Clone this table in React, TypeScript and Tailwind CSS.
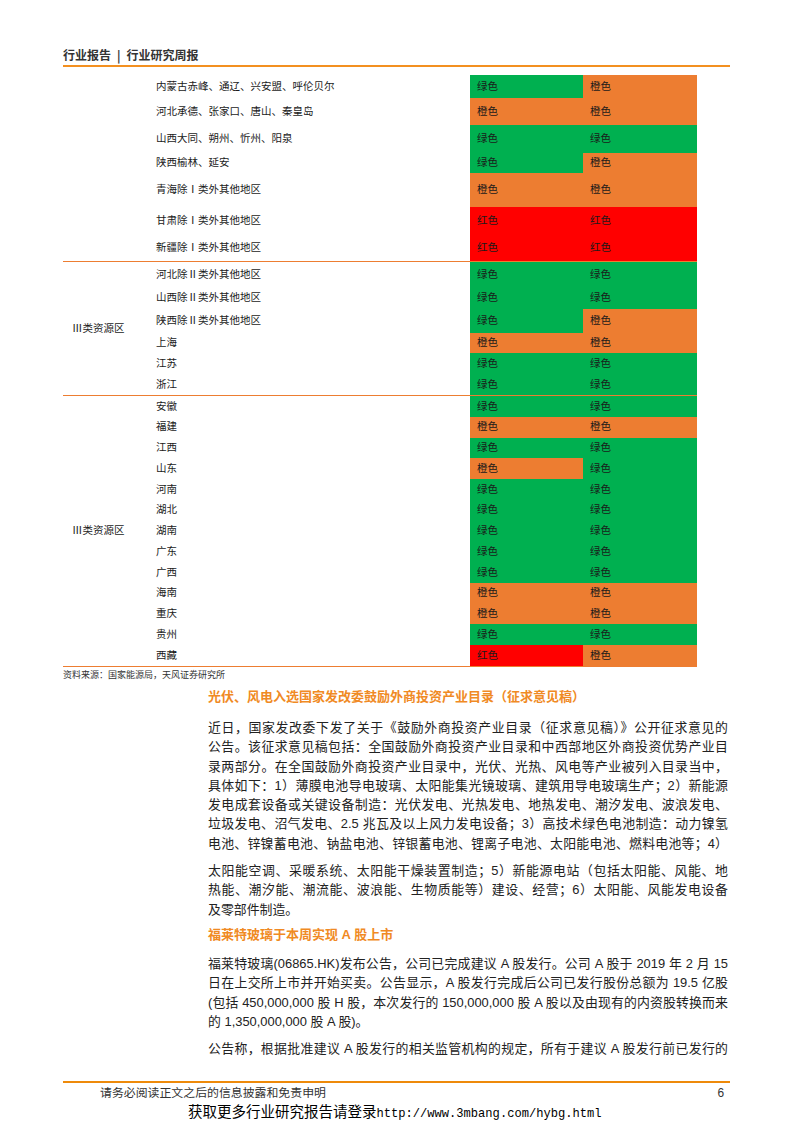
const GREEN = "bg-[#00B050]";
const ORANGE = "bg-[#ED7D31]";
const RED = "bg-[#FF0000]";

type Cell = "g" | "o" | "r";
type Row = { name: string; a: Cell; b: Cell; h: number };

const cellBg: Record<Cell, string> = { g: GREEN, o: ORANGE, r: RED };
const cellText: Record<Cell, string> = { g: "绿色", o: "橙色", r: "红色" };

const sections: { label: string; rows: Row[] }[] = [
  {
    label: "",
    rows: [
      { name: "内蒙古赤峰、通辽、兴安盟、呼伦贝尔", a: "g", b: "o", h: 23 },
      { name: "河北承德、张家口、唐山、秦皇岛", a: "o", b: "o", h: 27 },
      { name: "山西大同、朔州、忻州、阳泉", a: "g", b: "g", h: 28 },
      { name: "陕西榆林、延安", a: "g", b: "o", h: 20 },
      { name: "青海除Ⅰ类外其他地区", a: "o", b: "o", h: 34 },
      { name: "甘肃除Ⅰ类外其他地区", a: "r", b: "r", h: 27 },
      { name: "新疆除Ⅰ类外其他地区", a: "r", b: "r", h: 27 },
    ],
  },
  {
    label: "Ⅲ类资源区",
    rows: [
      { name: "河北除Ⅱ类外其他地区", a: "g", b: "g", h: 25 },
      { name: "山西除Ⅱ类外其他地区", a: "g", b: "g", h: 22 },
      { name: "陕西除Ⅱ类外其他地区", a: "g", b: "o", h: 24 },
      { name: "上海", a: "o", b: "o", h: 20 },
      { name: "江苏", a: "g", b: "g", h: 21 },
      { name: "浙江", a: "g", b: "g", h: 21 },
    ],
  },
  {
    label: "Ⅲ类资源区",
    rows: [
      { name: "安徽", a: "g", b: "g", h: 20.77 },
      { name: "福建", a: "o", b: "o", h: 20.77 },
      { name: "江西", a: "g", b: "g", h: 20.77 },
      { name: "山东", a: "o", b: "g", h: 20.77 },
      { name: "河南", a: "g", b: "g", h: 20.77 },
      { name: "湖北", a: "g", b: "g", h: 20.77 },
      { name: "湖南", a: "g", b: "g", h: 20.77 },
      { name: "广东", a: "g", b: "g", h: 20.77 },
      { name: "广西", a: "g", b: "g", h: 20.77 },
      { name: "海南", a: "o", b: "o", h: 20.77 },
      { name: "重庆", a: "o", b: "o", h: 20.77 },
      { name: "贵州", a: "g", b: "g", h: 20.77 },
      { name: "西藏", a: "r", b: "o", h: 20.77 },
    ],
  },
];

// body lines, one div each so the breaks match the page
function Lines({ lines, lastFull }: { lines: string[]; lastFull?: boolean }) {
  return (
    <div className="text-[12.9px] leading-[19.3px] text-[#222]">
      {lines.map((l, i) => {
        const full = i < lines.length - 1 || lastFull;
        return (
          <div key={i} className={full ? "whitespace-nowrap text-justify [text-align-last:justify]" : "whitespace-nowrap"}>
            {l}
          </div>
        );
      })}
    </div>
  );
}

export default function App() {
  return (
    <div className="w-[793px] h-[1122px] bg-white font-['Liberation_Sans','Noto_Sans_CJK_SC',sans-serif] text-[#1a1a1a] overflow-hidden">
      <div className="ml-[63px] w-[667px] pt-[46px]">
        {/* header */}
        <div className="flex items-center text-[12px] leading-[18px] font-bold text-[#333] font-['Noto_Sans_CJK_SC',sans-serif]">
          <span>行业报告</span>
          <span className="mx-[6px]">|</span>
          <span>行业研究周报</span>
        </div>
        <div className="mt-[1px] h-[2px] bg-[#F39020]" />

        {/* table */}
        <div className="mt-[8px] w-[634px]">
          {sections.map((s, si) => (
            <div key={si} className="flex border-b border-[#ED7D31]">
              <div className="w-[90px] flex items-center pl-[9px] text-[10.5px]">{s.label}</div>
              <div className="flex-1 flex flex-col">
                {s.rows.map((r, ri) => (
                  <div key={ri} className="grid grid-cols-[317px_113px_114px] text-[10.5px]" style={{ height: r.h }}>
                    <div className="flex items-center pl-[3px]">{r.name}</div>
                    <div className={`flex items-center pl-[7px] ${cellBg[r.a]}`}>{cellText[r.a]}</div>
                    <div className={`flex items-center pl-[7px] ${cellBg[r.b]}`}>{cellText[r.b]}</div>
                  </div>
                ))}
              </div>
            </div>
          ))}
        </div>
        <div className="mt-[2px] text-[9px] leading-[12px] text-[#333]">资料来源：国家能源局，天风证券研究所</div>

        {/* article */}
        <div className="ml-[145px] w-[520px]">
          <div className="mt-[7px] text-[13px] leading-[18px] font-bold text-[#F08A24]">
            光伏、风电入选国家发改委鼓励外商投资产业目录（征求意见稿）
          </div>
          <div className="mt-[12px]">
            <Lines
              lastFull
              lines={[
                "近日，国家发改委下发了关于《鼓励外商投资产业目录（征求意见稿）》公开征求意见的",
                "公告。该征求意见稿包括：全国鼓励外商投资产业目录和中西部地区外商投资优势产业目",
                "录两部分。在全国鼓励外商投资产业目录中，光伏、光热、风电等产业被列入目录当中，",
                "具体如下：1）薄膜电池导电玻璃、太阳能集光镜玻璃、建筑用导电玻璃生产；2）新能源",
                "发电成套设备或关键设备制造：光伏发电、光热发电、地热发电、潮汐发电、波浪发电、",
                "垃圾发电、沼气发电、2.5 兆瓦及以上风力发电设备；3）高技术绿色电池制造：动力镍氢",
                "电池、锌镍蓄电池、钠盐电池、锌银蓄电池、锂离子电池、太阳能电池、燃料电池等；4）",
              ]}
            />
          </div>
          <div className="mt-[8px]">
            <Lines
              lines={[
                "太阳能空调、采暖系统、太阳能干燥装置制造；5）新能源电站（包括太阳能、风能、地",
                "热能、潮汐能、潮流能、波浪能、生物质能等）建设、经营；6）太阳能、风能发电设备",
                "及零部件制造。",
              ]}
            />
          </div>
          <div className="mt-[7px] text-[13px] leading-[18px] font-bold text-[#F08A24]">福莱特玻璃于本周实现 A 股上市</div>
          <div className="mt-[10px]">
            <Lines
              lines={[
                "福莱特玻璃(06865.HK)发布公告，公司已完成建议 A 股发行。公司 A 股于 2019 年 2 月 15",
                "日在上交所上市并开始买卖。公告显示，A 股发行完成后公司已发行股份总额为 19.5 亿股",
                "(包括 450,000,000 股 H 股，本次发行的 150,000,000 股 A 股以及由现有的内资股转换而来",
                "的 1,350,000,000 股 A 股)。",
              ]}
            />
          </div>
          <div className="mt-[8px]">
            <Lines lastFull lines={["公告称，根据批准建议 A 股发行的相关监管机构的规定，所有于建议 A 股发行前已发行的"]} />
          </div>
        </div>

        {/* footer */}
        <div className="mt-[23px] h-[2px] bg-[#EE8A0A]" />
        <div className="mt-[3px] flex justify-between pl-[37px] pr-[6px] text-[11.9px] leading-[15px] text-[#333]">
          <span>请务必阅读正文之后的信息披露和免责申明</span>
          <span>6</span>
        </div>
        <div className="mt-[1px] pl-[125px] text-[14.5px] leading-[17px] text-black font-['Noto_Sans_CJK_SC',serif] whitespace-nowrap">
          获取更多行业研究报告请登录
          <span className="font-['Liberation_Mono',monospace] text-[12.1px]">http://www.3mbang.com/hybg.html</span>
        </div>
      </div>
    </div>
  );
}
